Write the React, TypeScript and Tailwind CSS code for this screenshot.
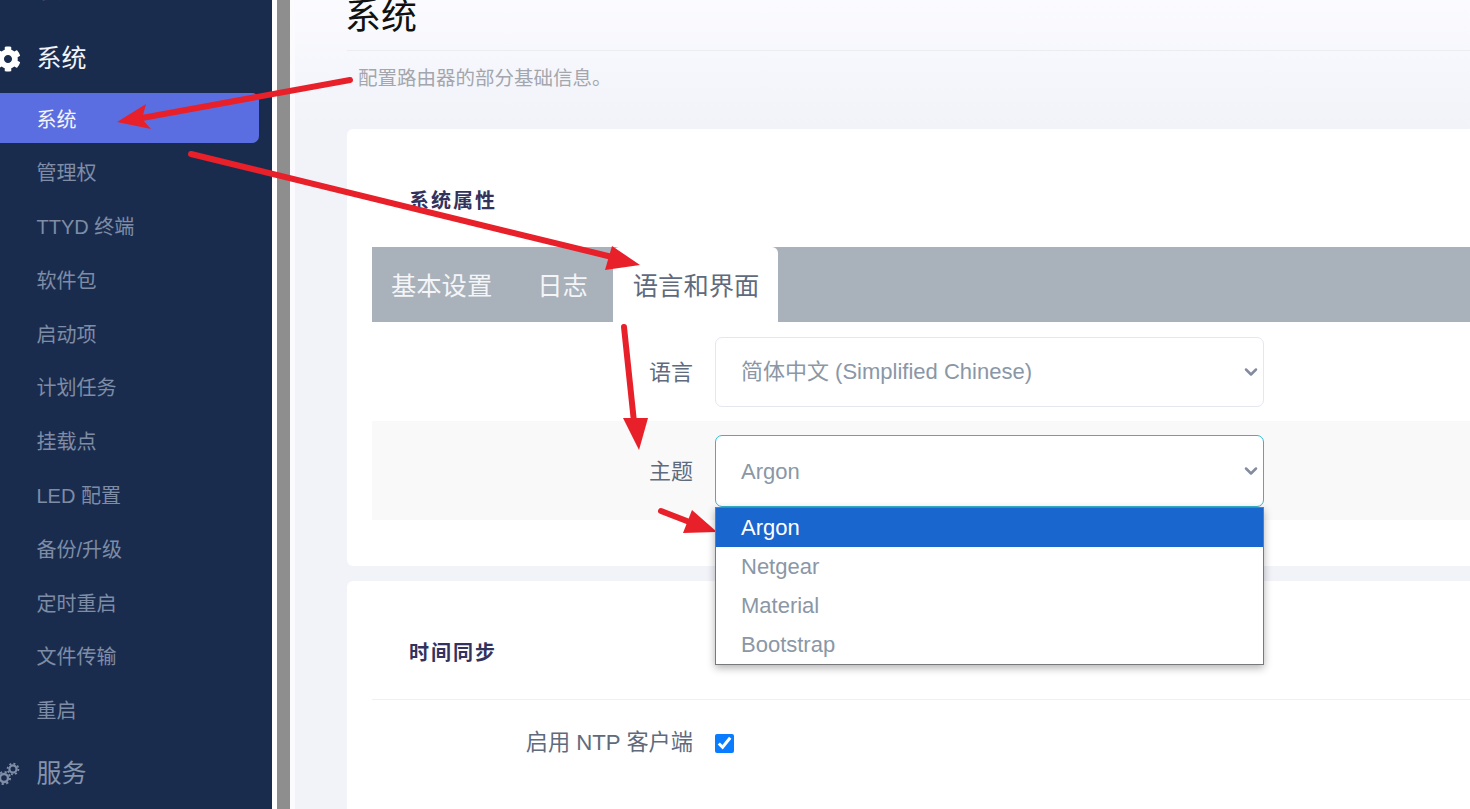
import React from 'react';
import { ChevronDown } from 'lucide-react';
import { FaCog } from 'react-icons/fa';

const subItems = ['系统', '管理权', 'TTYD 终端', '软件包', '启动项', '计划任务', '挂载点', 'LED 配置', '备份/升级', '定时重启', '文件传输', '重启'];
const themes = ['Argon', 'Netgear', 'Material', 'Bootstrap'];

// two outlined gears, the teeth are a dashed ring
const ServicesIcon: React.FC = () => (
  <svg className="w-[24px] h-[30px] -ml-[4px] mr-[16.5px] shrink-0 text-[#7f8ea6]" viewBox="0 0 24 30" fill="none" stroke="currentColor">
    <circle cx="8" cy="19" r="4" strokeWidth="2.4" />
    <circle cx="8" cy="19" r="6" strokeWidth="2" strokeDasharray="2.2 2.5" />
    <circle cx="17" cy="10" r="3.6" strokeWidth="2.2" />
    <circle cx="17" cy="10" r="5.4" strokeWidth="1.8" strokeDasharray="2 2.2" />
  </svg>
);

const Sidebar: React.FC = () => (
  <aside className="w-[272px] shrink-0 bg-[#1a2c4e] overflow-hidden">
    <div className="-mt-[35px] mb-[18px] h-[50px] pl-[36.5px] flex items-center text-[25px] text-[#8d9ab0]">状态</div>
    <div className="h-[50px] mb-[10px] pt-[1px] flex items-center text-[25px] text-[#f2f4f8]">
      <FaCog className="w-[26px] h-[26px] -ml-[5px] mr-[15.5px] shrink-0 text-white" />
      <span>系统</span>
    </div>
    <div className="flex flex-col gap-[3.8px]">
      {subItems.map((item, i) => (
        <div
          key={item}
          className={
            i === 0
              ? 'h-[50px] w-[259px] pl-[36.5px] pt-[3px] flex items-center text-[20px] text-[#f4f5fb] bg-[#5b6ee1] rounded-r-[7px]'
              : 'h-[50px] w-[259px] pl-[36.5px] pt-[3px] flex items-center text-[20px] text-[#7e8ca6]'
          }
        >
          {item}
        </div>
      ))}
    </div>
    <div className="mt-[13px] h-[50px] pt-[2px] flex items-center text-[25px] text-[#8494ac]">
      <ServicesIcon />
      <span>服务</span>
    </div>
  </aside>
);

const Arrows: React.FC = () => (
  <svg className="absolute inset-0 pointer-events-none" width="1470" height="809" viewBox="0 0 1470 809" fill="none">
    <g stroke="#e8202a" strokeWidth="6" strokeLinecap="round">
      <line x1="350" y1="80" x2="142" y2="118" />
      <line x1="191" y1="154" x2="612" y2="257" />
      <line x1="624" y1="327" x2="634" y2="422" />
      <line x1="661" y1="511" x2="692" y2="523" />
    </g>
    <g fill="#e8202a">
      <polygon points="117,122 146,104 142,119 151,129" />
      <polygon points="640,265 612,246 605,270" />
      <polygon points="639,450 623,418 648,418" />
      <polygon points="717,532 692,510 683,533" />
    </g>
  </svg>
);

const SelectBox: React.FC<{ text: string; focused?: boolean }> = ({ text, focused }) => (
  <div
    className={
      focused
        ? 'w-[549px] h-[72px] pl-[25px] pr-[2px] flex items-center justify-between bg-white border-[1.5px] border-[#35b5cb] rounded-[7px] text-[22px] text-[#8a97a6]'
        : 'w-[549px] h-[70px] pl-[25px] pr-[2px] pb-[1px] flex items-center justify-between bg-white border border-[#e4e7ee] rounded-[7px] text-[22px] text-[#8a97a6]'
    }
  >
    <span>{text}</span>
    <ChevronDown className="w-[20px] h-[20px] text-[#858b9e]" strokeWidth={3} />
  </div>
);

export default function App() {
  return (
    <div className="relative h-[809px] w-[1470px] flex overflow-hidden bg-white font-['Liberation_Sans','Noto_Sans_CJK_SC',sans-serif]">
      <Sidebar />
      <div className="w-[5px] shrink-0 bg-white" />
      <div className="w-[13px] shrink-0 bg-[#8e8e8e]" />
      <div className="w-[5px] shrink-0 bg-[#fbfbfd]" />

      <main className="flex-1 min-w-0 pl-[52px] bg-gradient-to-b from-[#fbfbff] to-[#f1f3f9] to-[16%]">
        <div className="-mt-[6px] pb-[10px] border-b border-[#ebedf2]">
          <h1 className="-ml-[2px] text-[36px] leading-[46px] text-[#111111]">系统</h1>
        </div>
        <p className="mt-[13px] mb-[37px] pl-[11px] text-[19.5px] leading-[28px] text-[#a3a6ad]">配置路由器的部分基础信息。</p>

        <section className="h-[437px] mb-[15px] pl-[25px] pt-[57px] bg-white rounded-l-[6px]">
          <h3 className="pl-[37px] mb-[31px] text-[20px] leading-[30px] font-bold tracking-[2px] text-[#32325d]">系统属性</h3>
          <div className="h-[75px] flex bg-[#a9b1bb] text-[25.3px] text-[#f4f5f7]">
            <div className="pl-[19px] pr-[22px] pt-[4px] flex items-center">基本设置</div>
            <div className="pl-[23px] pr-[25px] pt-[4px] flex items-center">日志</div>
            <div className="w-[165px] pl-[20px] pt-[4px] flex items-center bg-white rounded-t-[6px] text-[#5f6b7d]">语言和界面</div>
          </div>
          <div className="pt-[15px] pb-[14px] flex items-center">
            <label className="w-[321px] text-right text-[22px] text-[#5f6b7d]">语言</label>
            <div className="ml-[22px]">
              <SelectBox text="简体中文 (Simplified Chinese)" />
            </div>
          </div>
          <div className="pt-[14px] pb-[13px] flex items-center bg-[#f9f9f9]">
            <label className="w-[321px] text-right text-[22px] text-[#5f6b7d]">主题</label>
            <div className="relative ml-[22px]">
              <SelectBox text="Argon" focused />
              <ul className="absolute left-0 top-full z-10 w-[549px] bg-white border border-[#77797d] shadow-[0_3px_8px_rgba(0,0,0,0.3)] text-[22px] text-[#8a97a6]">
                {themes.map((t, i) => (
                  <li
                    key={t}
                    className={
                      i === 0
                        ? 'h-[39px] pl-[25px] pb-[1px] flex items-center bg-[#1a66cf] text-white'
                        : 'h-[39px] pl-[25px] pb-[1px] flex items-center'
                    }
                  >
                    {t}
                  </li>
                ))}
              </ul>
            </div>
          </div>
        </section>

        <section className="h-[300px] pl-[25px] pt-[57px] bg-white rounded-l-[6px]">
          <h3 className="pl-[37px] pb-[31px] text-[20px] leading-[30px] font-bold tracking-[2px] text-[#32325d] border-b border-[#eff0f3]">时间同步</h3>
          <div className="pt-[28px] flex items-center">
            <label className="w-[321px] text-right text-[22.2px] leading-[30px] text-[#5f6b7d]">启用 NTP 客户端</label>
            <input type="checkbox" defaultChecked className="ml-[22px] w-[19px] h-[19px] accent-[#0a7cff]" />
          </div>
        </section>
      </main>
      <Arrows />
    </div>
  );
}
